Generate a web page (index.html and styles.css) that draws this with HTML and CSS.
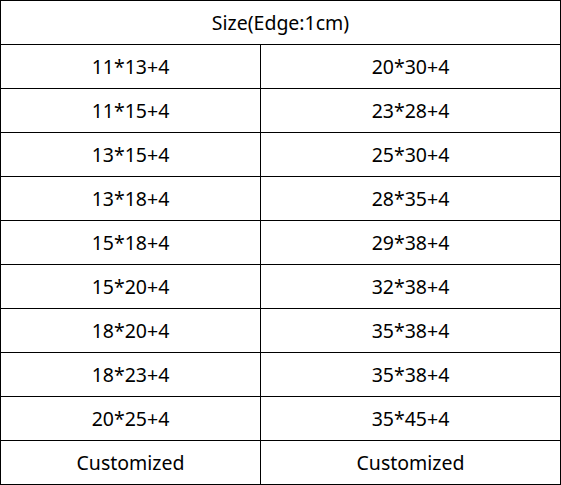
FILE: index.html
```html
<!DOCTYPE html>
<html>
<head>
<meta charset="utf-8">
<link rel="stylesheet" href="styles.css">
</head>
<body>
<div class="table">
  <div class="cell head">Size(Edge:1cm)</div>
  <div class="cell">11*13+4</div><div class="cell">20*30+4</div>
  <div class="cell">11*15+4</div><div class="cell">23*28+4</div>
  <div class="cell">13*15+4</div><div class="cell">25*30+4</div>
  <div class="cell">13*18+4</div><div class="cell">28*35+4</div>
  <div class="cell">15*18+4</div><div class="cell">29*38+4</div>
  <div class="cell">15*20+4</div><div class="cell">32*38+4</div>
  <div class="cell">18*20+4</div><div class="cell">35*38+4</div>
  <div class="cell">18*23+4</div><div class="cell">35*38+4</div>
  <div class="cell">20*25+4</div><div class="cell">35*45+4</div>
  <div class="cell">Customized</div><div class="cell">Customized</div>
</div>
</body>
</html>
```

FILE: styles.css
```css
html, body {
  margin: 0;
  padding: 0;
  background: #fff;
}
.table {
  display: grid;
  grid-template-columns: 260px 300px;
  grid-auto-rows: 44px;
  width: 560px;
  border-top: 1px solid #000;
  border-left: 1px solid #000;
  font-family: "Noto Sans", "Open Sans", sans-serif;
  font-size: 19.5px;
  color: #000;
}
.cell {
  box-sizing: border-box;
  border-right: 1px solid #000;
  border-bottom: 1px solid #000;
  display: flex;
  align-items: center;
  justify-content: center;
  padding-bottom: 1px;
}
.head {
  grid-column: 1 / 3;
}
```
